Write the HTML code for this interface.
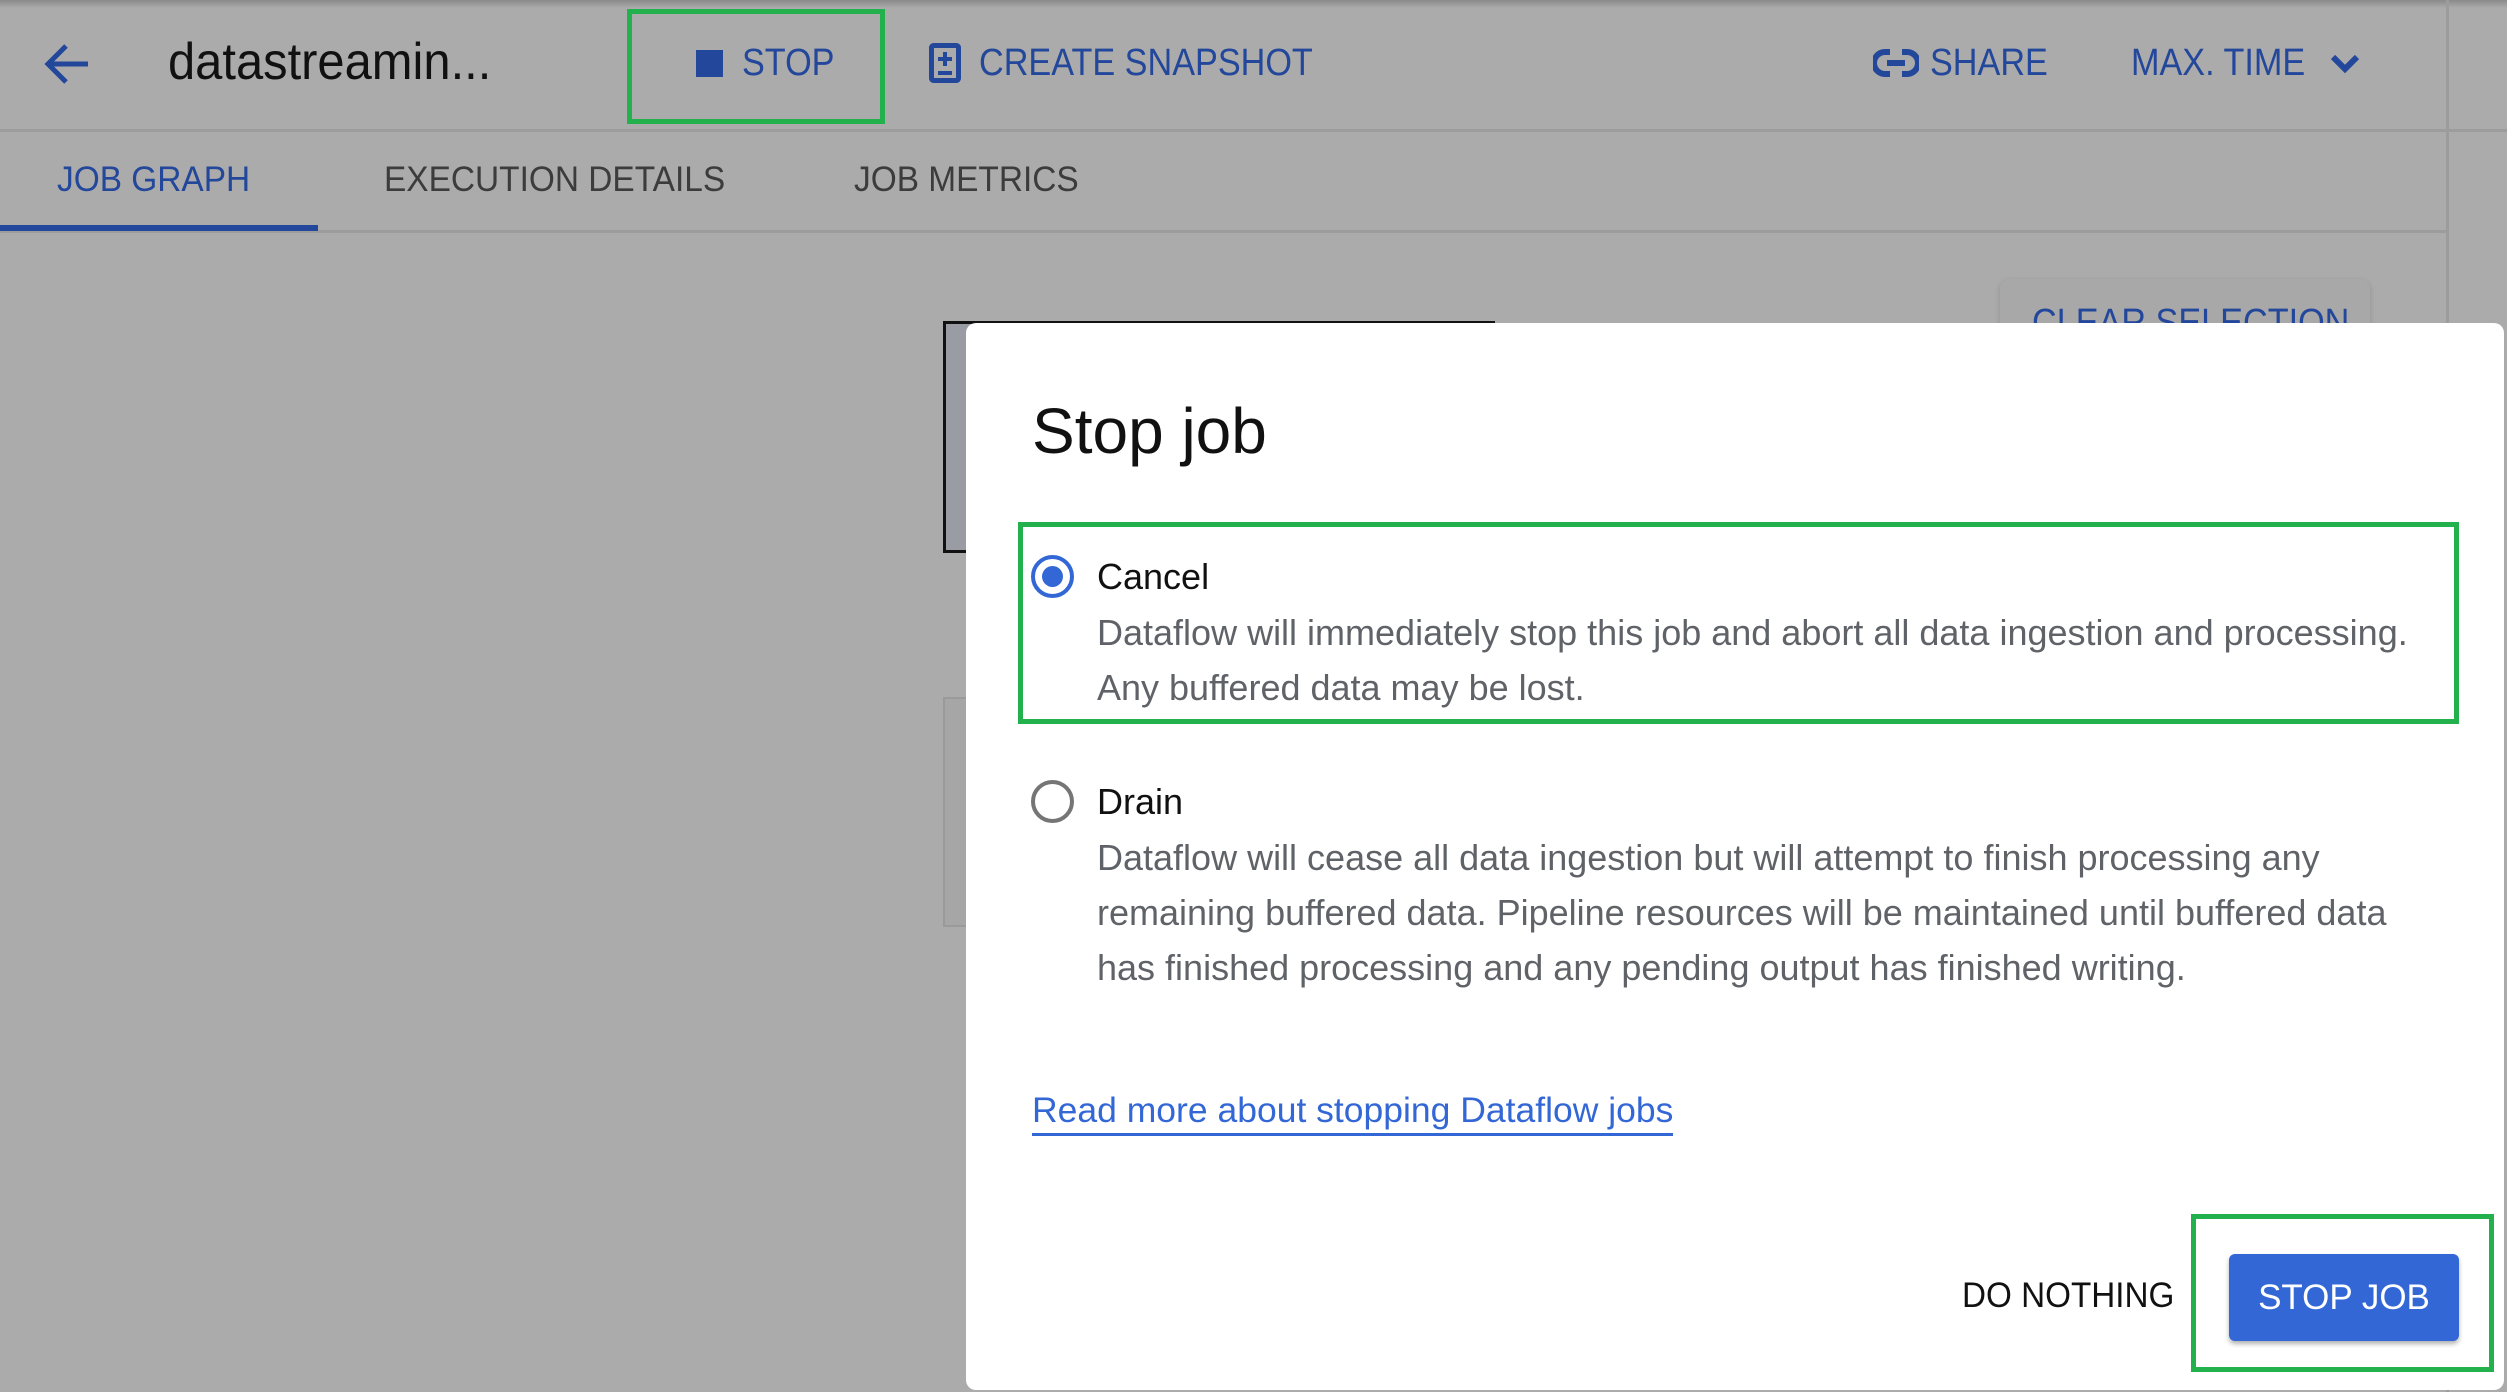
<!DOCTYPE html>
<html><head><meta charset="utf-8"><style>
*{margin:0;padding:0;box-sizing:border-box}
body{width:2507px;height:1392px;overflow:hidden;background:#ababab;font-family:"Liberation Sans",sans-serif;position:relative}
.a{position:absolute;white-space:nowrap;transform-origin:left center}
.blue{color:#23479a}
.tab{font-size:35px;top:160px;transform:scaleX(.955)}
.h{transform:scaleX(.9)}
.d{color:#5f6368;font-size:36px;left:1097px}
</style></head><body>
<div class="a" style="left:0;top:0;width:2507px;height:8px;background:linear-gradient(#8a8a8a,#ababab)"></div>
<div class="a" style="left:0;top:129px;width:2447px;height:3px;background:#9c9c9c"></div>
<div class="a" style="left:0;top:230px;width:2447px;height:3px;background:#9c9c9c"></div>
<div class="a" style="left:2446px;top:0;width:3px;height:1392px;background:#9c9c9c"></div>
<div class="a" style="left:2449px;top:129px;width:58px;height:3px;background:#9c9c9c"></div>
<svg class="a" style="left:42px;top:40px" width="50" height="48" viewBox="0 0 50 48"><path d="M46 24H8M24 6L6 24l18 18" stroke="#23479a" stroke-width="5" fill="none"/></svg>
<div class="a" style="left:168px;top:32px;font-size:52px;color:#111;transform:scaleX(.94)">datastreamin...</div>
<div class="a" style="left:627px;top:9px;width:258px;height:115px;border:5px solid #23b14d"></div>
<div class="a" style="left:696px;top:50px;width:27px;height:27px;background:#23479a"></div>
<div class="a blue h" style="left:742px;top:42px;font-size:38px">STOP</div>
<svg class="a" style="left:929px;top:43px" width="32" height="40" viewBox="0 0 32 40"><rect x="2.5" y="2.5" width="27" height="35" rx="2" stroke="#23479a" stroke-width="5" fill="none"/><path d="M16 9v14M9 16h14M9 30h14" stroke="#23479a" stroke-width="4"/></svg>
<div class="a blue h" style="left:979px;top:42px;font-size:38px">CREATE SNAPSHOT</div>
<svg class="a" style="left:1873px;top:48px" width="46" height="30" viewBox="0 0 46 30"><path d="M17 4H12a11 11 0 0 0 0 22h5M29 4h5a11 11 0 0 1 0 22h-5M14 15h18" stroke="#23479a" stroke-width="6" fill="none"/></svg>
<div class="a blue h" style="left:1930px;top:42px;font-size:38px">SHARE</div>
<div class="a blue h" style="left:2131px;top:42px;font-size:38px">MAX. TIME</div>
<svg class="a" style="left:2330px;top:52px" width="30" height="22" viewBox="0 0 30 22"><path d="M3 5l12 12L27 5" stroke="#23479a" stroke-width="6" fill="none"/></svg>
<div class="a tab blue" style="left:57px">JOB GRAPH</div>
<div class="a tab" style="left:384px;color:#3c3c3c">EXECUTION DETAILS</div>
<div class="a tab" style="left:854px;color:#3c3c3c">JOB METRICS</div>
<div class="a" style="left:0;top:225px;width:318px;height:6px;background:#23479a"></div>
<div class="a" style="left:2000px;top:279px;width:370px;height:80px;background:#a8a8a8;border-radius:10px;box-shadow:0 2px 6px rgba(0,0,0,.15)"></div>
<div class="a blue h" style="left:2032px;top:302px;font-size:38px">CLEAR SELECTION</div>
<div class="a" style="left:943px;top:321px;width:552px;height:232px;border:3px solid #111;background:#9a9ca4"></div>
<div class="a" style="left:943px;top:697px;width:30px;height:230px;border:2px solid #9a9a9a;background:#a6a6a6"></div>
<div class="a" style="left:966px;top:323px;width:1538px;height:1067px;background:#fff;border-radius:10px"></div>
<div class="a" style="left:1032px;top:394px;font-size:64px;color:#111">Stop job</div>
<div class="a" style="left:1018px;top:522px;width:1441px;height:202px;border:5px solid #23b14d"></div>
<div class="a" style="left:1031px;top:555px;width:43px;height:43px;border:4px solid #3367d6;border-radius:50%"></div>
<div class="a" style="left:1042px;top:566px;width:21px;height:21px;background:#3367d6;border-radius:50%"></div>
<div class="a" style="left:1097px;top:556px;font-size:36px;color:#111">Cancel</div>
<div class="a d" style="top:612px">Dataflow will immediately stop this job and abort all data ingestion and processing.</div>
<div class="a d" style="top:667px">Any buffered data may be lost.</div>
<div class="a" style="left:1031px;top:780px;width:43px;height:43px;border:4px solid #757575;border-radius:50%"></div>
<div class="a" style="left:1097px;top:781px;font-size:36px;color:#111">Drain</div>
<div class="a d" style="top:837px">Dataflow will cease all data ingestion but will attempt to finish processing any</div>
<div class="a d" style="top:892px">remaining buffered data. Pipeline resources will be maintained until buffered data</div>
<div class="a d" style="top:947px">has finished processing and any pending output has finished writing.</div>
<div class="a" style="left:1032px;top:1090px;font-size:35.5px;color:#3367d6;border-bottom:3px solid #3367d6;padding-bottom:2px">Read more about stopping Dataflow jobs</div>
<div class="a" style="left:1962px;top:1276px;font-size:35px;color:#111;transform:scaleX(.95)">DO NOTHING</div>
<div class="a" style="left:2191px;top:1214px;width:303px;height:158px;border:5px solid #23b14d"></div>
<div class="a" style="left:2229px;top:1254px;width:230px;height:87px;background:#3367d6;border-radius:6px;box-shadow:0 3px 5px rgba(0,0,0,.3);color:#fff;font-size:35px;text-align:center;line-height:87px">STOP JOB</div>
</body></html>
